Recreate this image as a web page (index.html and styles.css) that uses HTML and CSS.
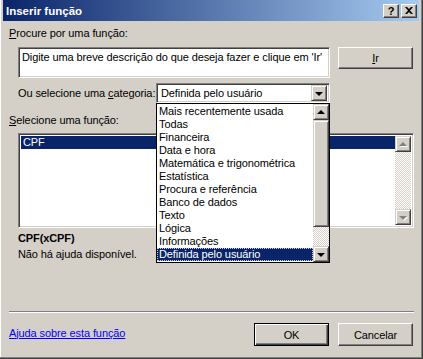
FILE: index.html
```html
<!DOCTYPE html>
<html lang="pt-BR">
<head>
    <meta charset="UTF-8">
    <title>Inserir função</title>
    <link rel="stylesheet" href="styles.css">
</head>
<body>

    <div class="dialog">
        <div class="titlebar">
            <span class="title">Inserir função</span>
            <div class="caption-btns">
                <span class="cap-btn">?</span>
                <span class="cap-btn">
                    <svg width="8" height="7" viewBox="0 0 8 7"><path d="M0 0h2l2 2 2-2h2L5 3.5 8 7H6L4 5 2 7H0l3-3.5z" fill="#000"/></svg>
                </span>
            </div>
        </div>

        <div class="content">
            <div class="label"><u>P</u>rocure por uma função:</div>

            <div class="search-row">
                <div class="search-box sunken">Digite uma breve descrição do que deseja fazer e clique em 'Ir'</div>
                <button class="btn go"><u>I</u>r</button>
            </div>

            <div class="category-row">
                <span class="label">Ou selecione uma <u>c</u>ategoria:</span>
                <div class="combo">
                    <div class="combo-field sunken">
                        <span class="combo-value">Definida pelo usuário</span>
                        <span class="arrow-btn"><i class="tri down"></i></span>
                    </div>
                    <div class="dropdown">
                        <ul class="options">
                            <li>Mais recentemente usada</li>
                            <li>Todas</li>
                            <li>Financeira</li>
                            <li>Data e hora</li>
                            <li>Matemática e trigonométrica</li>
                            <li>Estatística</li>
                            <li>Procura e referência</li>
                            <li>Banco de dados</li>
                            <li>Texto</li>
                            <li>Lógica</li>
                            <li>Informações</li>
                            <li class="selected">Definida pelo usuário</li>
                        </ul>
                        <div class="vscroll">
                            <span class="arrow-btn"><i class="tri up"></i></span>
                            <span class="thumb"></span>
                            <span class="track"></span>
                            <span class="arrow-btn"><i class="tri down"></i></span>
                        </div>
                    </div>
                </div>
            </div>

            <div class="label func-label"><u>S</u>elecione uma função:</div>

            <div class="func-list sunken">
                <ul class="functions">
                    <li class="selected">CPF</li>
                </ul>
                <div class="vscroll disabled">
                    <span class="arrow-btn"><i class="tri up"></i></span>
                    <span class="track"></span>
                    <span class="arrow-btn"><i class="tri down"></i></span>
                </div>
            </div>

            <div class="signature">CPF(xCPF)</div>
            <div class="desc">Não há ajuda disponível.</div>

            <div class="separator"></div>

            <div class="footer">
                <a href="#" class="help-link">Ajuda sobre esta função</a>
                <div class="footer-btns">
                    <button class="btn default">OK</button>
                    <button class="btn">Cancelar</button>
                </div>
            </div>
        </div>
    </div>

</body>
</html>
```

FILE: styles.css
```css
body {
    margin: 0;
    padding: 0;
    font-family: "Liberation Sans", Arial, sans-serif;
    font-size: 11px;
    letter-spacing: -0.1px;
    color: #000;
    background-color: #d4d0c8;
}
ul {
    list-style: none;
    margin: 0;
    padding: 0;
}
.dialog {
    width: 423px;
    height: 359px;
    box-sizing: border-box;
    background-color: #d4d0c8;
    border-right: 1px solid #404040;
    border-bottom: 1px solid #404040;
    padding: 0 3px 3px 3px;
    box-shadow: inset -1px -1px #808080, inset 1px 0 #fff;
    white-space: nowrap;
}
.titlebar {
    height: 21px;
    display: flex;
    align-items: center;
    justify-content: space-between;
    padding: 0 2px 0 2px;
    background: linear-gradient(to right, #0a246a, #a6caf0);
}
.title {
    color: white;
    font-weight: bold;
    font-size: 11.5px;
    letter-spacing: 0;
    padding-left: 1px;
}
.caption-btns {
    display: flex;
    gap: 2px;
}
.cap-btn {
    width: 16px;
    height: 14px;
    box-sizing: border-box;
    display: flex;
    align-items: center;
    justify-content: center;
    font-weight: bold;
    font-size: 11px;
    background-color: #d4d0c8;
    border: 1px solid;
    border-color: #fff #404040 #404040 #fff;
    box-shadow: inset -1px -1px #808080;
}

/* bordas estilo Windows clássico */
.sunken {
    border: 1px solid;
    border-color: #808080 #fff #fff #808080;
    box-shadow: inset 1px 1px #404040, inset -1px -1px #d4d0c8;
    background-color: white;
}
.btn {
    font-family: inherit;
    font-size: 11px;
    letter-spacing: inherit;
    color: #000;
    background-color: #d4d0c8;
    border: 1px solid;
    border-color: #fff #404040 #404040 #fff;
    box-shadow: inset -1px -1px #808080;
    padding: 0;
    cursor: pointer;
}
.btn.default {
    border-color: #000;
    box-shadow: inset 1px 1px #fff, inset -1px -1px #404040, inset -2px -2px #808080;
}

.content {
    padding: 6px 6px 6px 6px;
}
.label {
    line-height: 13px;
}
.search-row {
    display: flex;
    gap: 8px;
    margin: 7px 0 0 9px;
    align-items: flex-start;
}
.search-box {
    width: 312px;
    height: 31px;
    box-sizing: border-box;
    padding: 3px 3px;
    line-height: 13px;
    overflow: hidden;
    flex-shrink: 0;
}
.go {
    width: 76px;
    height: 22px;
}

.category-row {
    width: 312px;
    margin: 5px 0 0 9px;
    display: flex;
    justify-content: space-between;
    align-items: center;
}
.combo {
    position: relative;
    width: 174px;
    flex-shrink: 0;
}
.combo-field {
    height: 20px;
    box-sizing: border-box;
    display: flex;
    align-items: center;
    justify-content: space-between;
    padding: 2px;
}
.combo-value {
    padding-left: 2px;
}
.arrow-btn {
    width: 16px;
    height: 16px;
    box-sizing: border-box;
    display: flex;
    align-items: center;
    justify-content: center;
    background-color: #d4d0c8;
    border: 1px solid;
    border-color: #d4d0c8 #404040 #404040 #d4d0c8;
    box-shadow: inset 1px 1px #fff, inset -1px -1px #808080;
}
.tri {
    width: 0;
    height: 0;
    border-left: 4px solid transparent;
    border-right: 4px solid transparent;
}
.tri.down {
    border-top: 4px solid #000;
    margin-top: 1px;
}
.tri.up {
    border-bottom: 4px solid #000;
    margin-bottom: 1px;
}

.dropdown {
    position: absolute;
    top: 100%;
    left: 0;
    width: 174px;
    height: 160px;
    box-sizing: border-box;
    border: 1px solid #000;
    background-color: white;
    display: flex;
    z-index: 2;
}
.options {
    flex: 1;
    padding-top: 1px;
}
.options li {
    line-height: 13px;
    padding-left: 2px;
}
.options li.selected {
    background-color: #0a246a;
    color: white;
    outline: 1px dotted #d4d0c8;
    outline-offset: -1px;
}
.vscroll {
    width: 16px;
    display: flex;
    flex-direction: column;
}
.vscroll .thumb {
    height: 107px;
    box-sizing: border-box;
    background-color: #d4d0c8;
    border: 1px solid;
    border-color: #d4d0c8 #404040 #404040 #d4d0c8;
    box-shadow: inset 1px 1px #fff, inset -1px -1px #808080;
}
.vscroll .track {
    flex: 1;
    background: repeating-conic-gradient(#fff 0 25%, #d4d0c8 0 50%) 0 0 / 2px 2px;
}
.vscroll.disabled .tri.up {
    border-bottom-color: #808080;
    filter: drop-shadow(1px 1px 0 #fff);
}
.vscroll.disabled .tri.down {
    border-top-color: #808080;
    filter: drop-shadow(1px 1px 0 #fff);
}

.func-label {
    margin-top: 11px;
}
.func-list {
    margin: 6px 0 0 9px;
    width: 396px;
    height: 95px;
    box-sizing: border-box;
    padding: 2px;
    display: flex;
}
.functions {
    flex: 1;
}
.functions li {
    line-height: 13px;
    padding-left: 2px;
}
.functions li.selected {
    background-color: #0a246a;
    color: white;
}

.signature {
    margin: 4px 0 0 9px;
    font-weight: bold;
    line-height: 13px;
}
.desc {
    margin: 3px 0 0 9px;
    line-height: 13px;
}
.separator {
    margin-top: 50px;
    border-top: 1px solid #808080;
    border-bottom: 1px solid #fff;
    height: 0;
    margin-right: -1px;
}
.footer {
    margin-top: 10px;
    display: flex;
    justify-content: space-between;
    align-items: center;
}
.help-link {
    color: #0000ff;
    text-decoration: underline;
    margin-bottom: 4px;
}
.footer-btns {
    display: flex;
    gap: 9px;
}
.footer-btns .btn {
    width: 75px;
    height: 23px;
}
```
